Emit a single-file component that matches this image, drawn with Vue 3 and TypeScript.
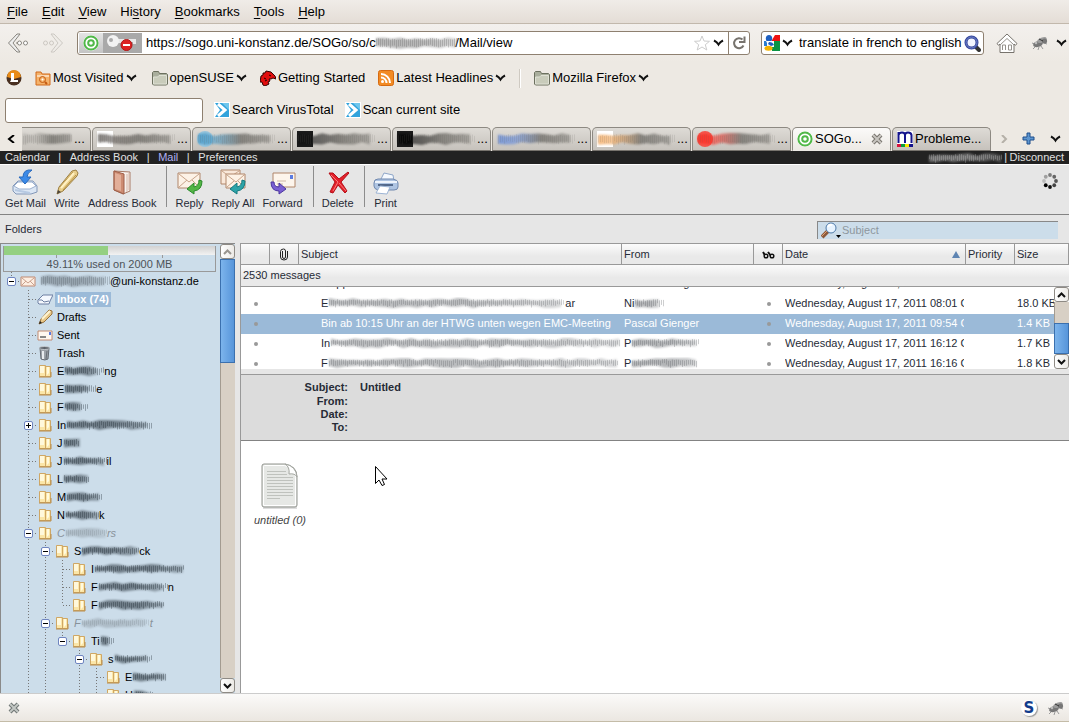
<script setup lang="ts">
import { h, ref } from 'vue'

interface SmudgeProps {
  w: number
  h?: number
  seed?: number
  color?: string
  lead?: string
  strength?: number
}

function randomFrom(seed: number): () => number {
  let s = seed * 7919 + 17
  return () => {
    s = (s * 16807) % 2147483647
    return s / 2147483647
  }
}

// Scribbled-over text: a soft uneven band with fine upright strokes.
const Smudge = (p: SmudgeProps) => {
  const height = p.h ?? 12
  const seed = p.seed ?? 1
  const color = p.color ?? '#3c4650'
  const next = randomFrom(seed)
  const strength = p.strength ?? 1
  const top: string[] = []
  const bottom: string[] = []
  for (let x = 1; x <= p.w; x += 8) {
    top.push(`${x},${(1 + next() * 3).toFixed(1)}`)
    bottom.unshift(`${x},${(height - 1 - next() * 3).toFixed(1)}`)
  }
  let strokes = ''
  for (let x = 1; x < p.w; x += 2) {
    const y = 2 + next() * 2
    const len = height - 5 - next() * 3
    strokes += `M${x}.5 ${y.toFixed(1)}v${len.toFixed(1)}`
  }
  const id = `smudge-${seed}-${p.w}`
  return h('svg', { class: 'smudge', width: p.w, height, viewBox: `0 0 ${p.w} ${height}`, 'aria-hidden': 'true' }, [
    h('defs', [
      h('linearGradient', { id }, [
        h('stop', { offset: '0', 'stop-color': p.lead ?? color }),
        h('stop', { offset: p.lead ? '.25' : '.4', 'stop-color': p.lead ?? color, 'stop-opacity': p.lead ? '.8' : '1' }),
        h('stop', { offset: '.6', 'stop-color': color }),
        h('stop', { offset: '1', 'stop-color': color, 'stop-opacity': '.6' })
      ])
    ]),
    h('polygon', { class: 'haze', points: [...top, ...bottom].join(' '), fill: `url(#${id})`, opacity: (p.lead ? 0.7 : 0.46) * strength }),
    h('path', { d: strokes, stroke: color, 'stroke-width': 1, opacity: (p.lead ? 0.14 : 0.3) * strength })
  ])
}
Smudge.props = ['w', 'h', 'seed', 'color', 'lead', 'strength']

const Chevron = () =>
  h('svg', { width: 11, height: 8, viewBox: '0 0 11 8', 'aria-hidden': 'true' }, [
    h('path', { d: 'M1 1.5Q4 3 5.5 5.5 7 3 10 1.5', fill: 'none', stroke: '#111', 'stroke-width': 2 })
  ])

const ArrowGlyph = (p: { d: string }) =>
  h('svg', { width: 9, height: 8, viewBox: '0 0 9 8', 'aria-hidden': 'true' }, [
    h('path', { d: p.d, fill: 'none', stroke: 'currentColor', 'stroke-width': 2 })
  ])
ArrowGlyph.props = ['d']

const Fly = () =>
  h('svg', { width: 18, height: 16, viewBox: '0 0 18 16', 'aria-hidden': 'true' }, [
    h('path', { d: 'M4 9L1 8M5 11l-3 3M8 12l-1 3M10 11l2 3M13 8l3 1', stroke: '#999', fill: 'none' }),
    h('ellipse', { cx: 7, cy: 9, rx: 5, ry: 3, fill: '#777', transform: 'rotate(-18 7 9)' }),
    h('ellipse', { cx: 11, cy: 5, rx: 5, ry: 2.4, fill: '#9c9c9c', transform: 'rotate(-22 11 5)' }),
    h('circle', { cx: 13.5, cy: 6, r: 2.6, fill: '#777' }),
    h('circle', { cx: 5, cy: 8, r: 1.3, fill: '#bbb' }),
    h('path', { d: 'M8 4l4 2', stroke: '#333' })
  ])

const Rings = () =>
  h('svg', { width: 16, height: 16, viewBox: '0 0 16 16', 'aria-hidden': 'true' }, [
    h('circle', { cx: 8, cy: 8, r: 7.8, fill: '#fff' }),
    h('circle', { cx: 8, cy: 8, r: 6.6, fill: 'none', stroke: '#50b848', 'stroke-width': 2 }),
    h('circle', { cx: 8, cy: 8, r: 2.8, fill: '#fff', stroke: '#50b848', 'stroke-width': 2 })
  ])

const FolderGrey = () =>
  h('svg', { width: 16, height: 16, viewBox: '0 0 16 16', 'aria-hidden': 'true' }, [
    h('path', { d: 'M.5 14V2.5l1-1h5l1 2h7l1 1V14l-1 1h-13z', fill: '#a9ae9c', stroke: '#6c705f' }),
    h('path', { d: 'M1.5 14V7h4l1.5-1.5h7.500V14z', fill: '#c9ccbb', stroke: '#dfe1d5' })
  ])

const VirusArrow = () =>
  h('svg', { width: 16, height: 16, viewBox: '0 0 16 16', 'aria-hidden': 'true' }, [
    h('path', { d: 'M0 0h16v16H0z', fill: '#fff' }),
    h('path', { d: 'M1 1h14v14H1l5-7z', fill: '#31a3dc' }),
    h('path', { d: 'M8 1h7v7z', fill: '#70c6ec' }),
    h('path', { d: 'M4 2l7 6-7 6', fill: 'none', stroke: '#fff', 'stroke-width': 3 })
  ])

const menu = [
  { pre: '', key: 'F', post: 'ile' },
  { pre: '', key: 'E', post: 'dit' },
  { pre: '', key: 'V', post: 'iew' },
  { pre: 'Hi', key: 's', post: 'tory' },
  { pre: '', key: 'B', post: 'ookmarks' },
  { pre: '', key: 'T', post: 'ools' },
  { pre: '', key: 'H', post: 'elp' }
]

const address = ref('https://sogo.uni-konstanz.de/SOGo/so/c' + ' '.repeat(22) + '/Mail/view')
const query = ref('translate in french to english')
const virusQuery = ref('')
const mailQuery = ref('')

const hiddenTabs = [
  { lead: '#b0ada8', seed: 3, back: '' },
  { lead: '#55504c', seed: 4, back: 'white' },
  { lead: '#3f95c6', seed: 5, back: 'round' },
  { lead: '#111111', seed: 6, back: 'dark' },
  { lead: '#000000', seed: 7, back: 'black' },
  { lead: '#5c86dc', seed: 8, back: 'blue' },
  { lead: '#f0a050', seed: 9, back: 'white' },
  { lead: '#ff2a20', seed: 10, back: 'red' }
]

interface Folder {
  guides: string
  start?: string
  w?: number
  end?: string
  faint?: boolean
}

// One letter per indent column: I line, T branch, L last branch, P/M plus or minus box, E minus box that ends its line.
const folders: Folder[] = [
  { guides: ' T', start: 'E', w: 40, end: 'ng' },
  { guides: ' T', start: 'E', w: 32, end: 'e' },
  { guides: ' T', start: 'F', w: 24 },
  { guides: ' P', start: 'In', w: 87 },
  { guides: ' T', start: 'J', w: 17 },
  { guides: ' T', start: 'J', w: 44, end: 'il' },
  { guides: ' T', start: 'L', w: 26 },
  { guides: ' T', start: 'M', w: 36 },
  { guides: ' T', start: 'N', w: 34, end: 'k' },
  { guides: ' M', start: 'C', w: 42, end: 'rs', faint: true },
  { guides: ' IM', start: 'S', w: 58, end: 'ck' },
  { guides: ' IIT', start: 'I', w: 91 },
  { guides: ' IIT', start: 'F', w: 70, end: 'n' },
  { guides: ' IIL', start: 'F', w: 66 },
  { guides: ' IM', start: 'F', w: 69, end: 't', faint: true },
  { guides: ' IIE', start: 'Ti', w: 14 },
  { guides: ' II M', start: 's', w: 38 },
  { guides: ' II IT', start: 'E', w: 34 },
  { guides: ' II IT', start: 'H', w: 20 }
]

interface Message {
  subject: string
  subjectW: number
  subjectEnd: string
  from: string
  fromW: number
  date: string
  size: string
  selected?: boolean
}

const messages: Message[] = [
  { subject: 'Mapp', subjectW: 0, subjectEnd: '', from: 'Pascal Gienger', fromW: 0, date: 'Wednesday, August 17, 2011 07:42 CEST', size: '2.1 KB' },
  { subject: 'E', subjectW: 237, subjectEnd: 'ar', from: 'Ni', fromW: 30, date: 'Wednesday, August 17, 2011 08:01 CEST', size: '18.0 KB' },
  { subject: 'Bin ab 10:15 Uhr an der HTWG unten wegen EMC-Meeting', subjectW: 0, subjectEnd: '', from: 'Pascal Gienger', fromW: 0, date: 'Wednesday, August 17, 2011 09:54 CEST', size: '1.4 KB', selected: true },
  { subject: 'In', subjectW: 290, subjectEnd: '', from: 'P', fromW: 68, date: 'Wednesday, August 17, 2011 16:12 CEST', size: '1.7 KB' },
  { subject: 'F', subjectW: 291, subjectEnd: '', from: 'P', fromW: 66, date: 'Wednesday, August 17, 2011 16:16 CEST', size: '1.8 KB' }
]

const spinner = ['#7c7c7c', '#666666', '#555555', '#444444', '#111111', '#000000', '#bbbbbb', '#a0a0a0']
function spoke(i: number) {
  const a = (i * Math.PI) / 4
  return { x: 8 + Math.sin(a) * 6, y: 8 - Math.cos(a) * 6 }
}
</script>

<template>
  <div class="window">
    <header class="chrome">
      <nav class="menubar" aria-label="Menu">
        <button v-for="m in menu" :key="m.key + m.post" type="button">{{ m.pre }}<u>{{ m.key }}</u>{{ m.post }}</button>
      </nav>

      <div class="navbar">
        <button type="button" class="nav-arrow" aria-label="Back">
          <svg width="22" height="20" viewBox="0 0 22 20">
            <path d="M10 1L1.500 10 10 19h3l-7-9 7-9z" fill="#eee" stroke="#88857f" />
            <circle cx="12.500" cy="10" r="2" fill="#fff" stroke="#88857f" /><circle cx="18.500" cy="10" r="2" fill="#fff" stroke="#88857f" />
            <path d="M9 10h2" stroke="#88857f" />
          </svg>
        </button>
        <button type="button" class="nav-arrow" aria-label="Forward" disabled>
          <svg width="22" height="20" viewBox="0 0 22 20">
            <path d="M12 1l8.500 9-8.500 9H9l7-9-7-9z" fill="#efece8" stroke="#ccc8c2" />
            <circle cx="3.500" cy="10" r="2" fill="none" stroke="#ccc8c2" /><circle cx="9.500" cy="10" r="2" fill="none" stroke="#ccc8c2" />
          </svg>
        </button>
        <div class="field address">
          <span class="site-icon"><Rings /></span>
          <span class="key-icon">
            <svg width="34" height="18" viewBox="0 0 34 18" aria-hidden="true">
              <path d="M12 5h18v5h-3V8h-2v3h-3V9H12z" fill="#e8e8e8" />
              <circle cx="7" cy="7" r="6" fill="#f2f2f2" /><circle cx="5" cy="6" r="2" fill="#aaa" />
              <circle cx="20.500" cy="11" r="5.500" fill="#d22" stroke="#b01818" /><path d="M17 11h7" stroke="#fff" stroke-width="2" />
            </svg>
          </span>
          <div class="address-text">
            <input v-model="address" type="text" aria-label="Address" />
            <Smudge class="address-smudge" :w="82" :h="14" :seed="21" color="#666666" />
          </div>
          <button type="button" aria-label="Bookmark this page">
            <svg width="16" height="16" viewBox="0 0 16 16"><path d="M8 1l2 5 5.500.3-4.200 3.400 1.500 5.300L8 12l-4.800 3 1.500-5.300L.5 6.300 6 6z" fill="#fff" stroke="#ccc" /></svg>
          </button>
          <button type="button" class="drop" aria-label="Show history"><Chevron /></button>
          <button type="button" class="reload" aria-label="Reload">
            <svg width="14" height="14" viewBox="0 0 14 14"><path d="M11.500 9.500A5 5 0 1 1 10.500 3.500" fill="none" stroke="#77736d" stroke-width="2" /><path d="M7 6h5.500V.5" fill="none" stroke="#77736d" stroke-width="2" /></svg>
          </button>
        </div>
        <div class="field search">
          <button type="button" class="engine" aria-label="Choose search engine">
            <svg width="16" height="16" viewBox="0 0 16 16">
              <path d="M0 0h16v16H0z" fill="#fff" /><path d="M8 0h8v6H8z" fill="#e11" /><path d="M8 6h8v10H8z" fill="#0a9444" />
              <path d="M0 6h3v5H0z" fill="#2a7dd0" />
              <path d="M8 0h3L8 5z" fill="#fff" />
              <ellipse cx="5" cy="3.500" rx="3.200" ry="3.500" fill="#1e5fc0" />
              <path d="M2 6h8v6H5z" fill="#fff" />
              <path d="M5 7q4 0 5 3l-3 1-3-2z" fill="#1e5fc0" />
              <ellipse cx="4.500" cy="13.300" rx="4" ry="2.500" fill="#f5b400" />
            </svg>
            <Chevron />
          </button>
          <input v-model="query" type="text" aria-label="Search the web" />
          <button type="button" aria-label="Search">
            <svg width="17" height="17" viewBox="0 0 17 17"><path d="M11 11l4 4" stroke="#333" stroke-width="4" stroke-linecap="round" /><circle cx="7.500" cy="7.500" r="5.500" fill="#f2f5ff" stroke="#34469a" stroke-width="3" /><circle cx="7.500" cy="7.500" r="5.500" fill="none" stroke="#7384cc" /></svg>
          </button>
        </div>
        <button type="button" class="home" aria-label="Home">
          <svg width="22" height="21" viewBox="0 0 22 21"><path d="M11 1L1 10.500l1.500 1.800L4 11v8.500h14V11l1.500 1.300L21 10.500z" fill="#fff" stroke="#77736d" /><path d="M4 12l7-6.500 7 6.500M6.500 17v-5h3v5M12.500 17v-5h3v5h-3" fill="none" stroke="#96928c" /></svg>
        </button>
        <button type="button" class="bug" aria-label="Firebug"><Fly /></button>
        <button type="button" class="more" aria-label="More"><Chevron /></button>
      </div>

      <nav class="bookmarks" aria-label="Bookmarks">
        <a href="#" aria-label="L">
          <svg width="16" height="16" viewBox="0 0 16 16"><circle cx="8" cy="8" r="7.500" fill="#493021" /><path d="M1 7a7 7 0 0 1 14 0L8 9z" fill="#e98b16" /><path d="M5 3h3v7h4v2H4l1-2z" fill="#fff" /></svg>
        </a>
        <a href="#" class="most">
          <svg width="16" height="16" viewBox="0 0 16 16"><path d="M1 15V2h5l1 2h8v11z" fill="#f5b26a" stroke="#d0681a" /><path d="M2 6h12" stroke="#fff" /><circle cx="7.500" cy="9.500" r="3" fill="#f5b26a" stroke="#c45a10" /><circle cx="7.500" cy="9.500" r="1" fill="#fff" /><path d="M10 12l2 2" stroke="#c45a10" stroke-width="2" /></svg>
          <span>Most Visited</span><Chevron />
        </a>
        <a href="#"><FolderGrey /><span>openSUSE</span><Chevron /></a>
        <a href="#">
          <svg width="16" height="16" viewBox="0 0 16 16"><path d="M1 6l2-1V3l2 0 1-2 5 1 4 4 1 3-3-1-2 1-2 0 1 2-2 1 1 2-4 2-2-1-1-3-2 0z" fill="#e10d0d" stroke="#300" /><path d="M9 5l2 1M4 8l2 1M5 11l2-1" stroke="#200" /></svg>
          <span>Getting Started</span>
        </a>
        <a href="#">
          <svg width="16" height="16" viewBox="0 0 16 16"><rect x=".5" y=".5" width="15" height="15" rx="2" fill="#f28b24" stroke="#d66a10" /><circle cx="4.500" cy="11.500" r="1.500" fill="#fff" /><path d="M3 7.500A5.500 5.500 0 0 1 8.500 13M3 4a9 9 0 0 1 9 9" fill="none" stroke="#fff" stroke-width="2" /></svg>
          <span>Latest Headlines</span><Chevron />
        </a>
        <span class="divider"></span>
        <a href="#"><FolderGrey /><span>Mozilla Firefox</span><Chevron /></a>
      </nav>

      <div class="virusbar">
        <input v-model="virusQuery" type="text" aria-label="VirusTotal search" />
        <button type="button"><VirusArrow /><span>Search VirusTotal</span></button>
        <button type="button"><VirusArrow /><span>Scan current site</span></button>
      </div>

      <div class="tabstrip">
        <button type="button" class="strip-button first" aria-label="Scroll tabs left"><ArrowGlyph d="M7 0L2 4l5 4" /></button>
        <div class="tabs">
          <button v-for="(t, i) in hiddenTabs" :key="t.seed" type="button" class="tab" :class="{ cut: i === 0 }">
            <span v-if="i > 0" class="mark" :class="t.back"></span>
            <Smudge class="tab-smudge" :class="{ over: i > 0 }" :w="i === 0 ? 50 : 78" :h="14" :seed="t.seed" color="#66645f" :lead="t.lead" />
            <span>...</span>
          </button>
          <div class="tab active">
            <Rings /><button type="button" class="tab-title">SOGo...</button>
            <button type="button" class="close" aria-label="Close tab">
              <svg width="12" height="12" viewBox="0 0 12 12"><path d="M2 2l8 8M10 2l-8 8" stroke="#77736d" stroke-width="4" /><path d="M2 2l8 8M10 2l-8 8" stroke="#c8c5c0" stroke-width="2" /></svg>
            </button>
          </div>
          <button type="button" class="tab">
            <svg width="16" height="16" viewBox="0 0 16 16" aria-hidden="true"><path d="M0 0h16v16H0z" fill="#fff" /><path d="M1.500 12V1M1.500 4Q2 1.500 5 1.500 8 1.500 8 4v8M8 4q0-2.500 3-2.500T14.500 4v8" fill="none" stroke="#14148c" stroke-width="2" /><path d="M0 13h4v3H0z" fill="#d8133c" /><path d="M4 13h4v3H4z" fill="#0a9c3c" /><path d="M8 13h4v3H8z" fill="#f7e600" /><path d="M12 13h4v3h-4z" fill="#14148c" /></svg>
            <span>Probleme...</span>
          </button>
        </div>
        <button type="button" class="strip-button pale" aria-label="Scroll tabs right"><ArrowGlyph d="M2 0l4 4-4 4" /></button>
        <button type="button" class="strip-button" aria-label="New tab">
          <svg width="13" height="13" viewBox="0 0 13 13"><path d="M5 1h3v4h4v3H8v4H5V8H1V5h4z" fill="#5d95cf" stroke="#1f4f8c" /></svg>
        </button>
        <button type="button" class="strip-button" aria-label="List all tabs"><Chevron /></button>
      </div>
    </header>

    <div class="app">
      <nav class="topnav" aria-label="Modules">
        <a href="#">Calendar</a><i>|</i><a href="#">Address Book</a><i>|</i><a href="#" class="current">Mail</a><i>|</i><a href="#">Preferences</a>
        <span class="spacer"></span>
        <Smudge :w="74" :h="12" :seed="31" color="#c8c8c8" /><i class="tight">|</i><a href="#">Disconnect</a>
      </nav>

      <div class="toolbar">
        <button type="button">
          <svg width="26" height="26" viewBox="0 0 26 26"><path d="M1 17l5-5h15l4 5v6l-6 2H4l-3-3z" fill="#dbe6f4" stroke="#8297b8" /><path d="M2 17l4-4h14l4 4-6 3H7z" fill="#fff" stroke="#9cb0cf" /><path d="M3 21l15 3" stroke="#b6c9e2" stroke-width="2" /><path d="M20 1q-9-1-9 7H7l6 7 6-7h-4q0-4 5-7z" fill="#3b8ae8" stroke="#2769bd" /></svg>
          <span>Get Mail</span>
        </button>
        <button type="button">
          <svg width="26" height="26" viewBox="0 0 26 26"><path d="M3 25l2-7L18 2l4-1 2 3-1 3L9 22z" fill="#e9cf8c" stroke="#9c7f42" /><path d="M6 18L19 3M9 21L22 6" stroke="#b89347" /><path d="M7 19L20 4" stroke="#fff1c4" stroke-width="2" /><path d="M3 25l1-4 3 2z" fill="#4b443c" /></svg>
          <span>Write</span>
        </button>
        <button type="button">
          <svg width="26" height="26" viewBox="0 0 26 26"><path d="M5 2l16 1v19l-7 3-9-4z" fill="#f8f1ec" stroke="#a87a66" /><path d="M5 2l10 3v20l-10-4z" fill="#cd8c72" stroke="#9e5e48" /><path d="M6 4l6 2v16l-6-2z" fill="#e2ae98" /><path d="M18 5v18M20 4v17" stroke="#d4b4a6" /></svg>
          <span>Address Book</span>
        </button>
        <span class="rule"></span>
        <button type="button">
          <svg width="26" height="26" viewBox="0 0 26 26"><path d="M1 4h22v15H1z" fill="#fdf2e6" stroke="#b0866a" /><path d="M2 5l10 8L22 5M2 18l8-7M22 18l-7-7" fill="none" stroke="#c8a48a" /><path d="M25 12q0 9-8 10v3l-7-5 7-6v4q5-1 5-7z" fill="#53b545" stroke="#2b8a2b" /></svg>
          <span>Reply</span>
        </button>
        <button type="button">
          <svg width="26" height="26" viewBox="0 0 26 26"><path d="M1 1h19v14H1z" fill="#f9e8da" stroke="#b0866a" /><path d="M2 2l8 6 9-6" fill="none" stroke="#c8a48a" /><path d="M6 5h19v14H6z" fill="#fdf2e6" stroke="#b0866a" /><path d="M7 6l9 7 8-7M7 18l7-6M24 18l-6-6" fill="none" stroke="#c8a48a" /><path d="M25 12q0 9-8 10v3l-7-5 7-6v4q5-1 5-7z" fill="#2da4a8" stroke="#157a80" /></svg>
          <span>Reply All</span>
        </button>
        <button type="button">
          <svg width="26" height="26" viewBox="0 0 26 26"><path d="M3 4h22v14H3z" fill="#fdf5ec" stroke="#b0866a" /><path d="M20 6h3v4h-3z" fill="#5b7be0" /><path d="M7 12h9M7 15h6" stroke="#d0b8a4" /><path d="M1 13q0 9 8 9v3l7-5-7-6v4q-5 0-5-5z" fill="#7a5fd2" stroke="#4c36a0" /></svg>
          <span>Forward</span>
        </button>
        <span class="rule"></span>
        <button type="button">
          <svg width="26" height="26" viewBox="0 0 26 26"><path d="M4 4l4 0 6 6 9-7 1 1-8 9 6 9-2 2-7-8-5 8-3-1 5-10z" fill="#e4202a" stroke="#b40f18" /><path d="M6 6l7 7-5 9M14 14l7 8" fill="none" stroke="#fa7a7a" /></svg>
          <span>Delete</span>
        </button>
        <span class="rule"></span>
        <button type="button">
          <svg width="26" height="26" viewBox="0 0 26 26"><path d="M8 10l3-6 9 2 1 6" fill="#f6faff" stroke="#8ea6c8" /><path d="M1 14q0-4 4-4h15q5 1 5 4v4q0 3-4 3H5q-4-1-4-4z" fill="#aec4e2" stroke="#7088ae" /><path d="M2 13h22" stroke="#eef4fc" stroke-width="2" /><path d="M5 16h15" stroke="#53698c" stroke-width="2" /><path d="M7 17l10 1-3 7-11-1z" fill="#fff" stroke="#9cb4d4" /></svg>
          <span>Print</span>
        </button>
        <span class="spacer"></span>
        <svg class="spinner" width="16" height="16" viewBox="0 0 16 16" role="img" aria-label="Loading">
          <circle v-for="(c, i) in spinner" :key="i" :cx="spoke(i).x" :cy="spoke(i).y" r="1.900" :fill="c" />
        </svg>
      </div>

      <div class="caption">
        <h1>Folders</h1>
        <div class="mail-search">
          <button type="button" aria-label="Search in">
            <svg width="20" height="17" viewBox="0 0 20 17"><path d="M7 9l-6 6" stroke="#8c5a3c" stroke-width="4" /><path d="M6 9l-5 5" stroke="#e0a070" /><circle cx="10" cy="6" r="5" fill="#e8f4ff" stroke="#4d79a8" /><path d="M7 5q1-3 4-2" stroke="#fff" stroke-width="2" fill="none" /><path d="M15 13h5l-2.500 3z" fill="#000" /></svg>
          </button>
          <input v-model="mailQuery" type="search" placeholder="Subject" aria-label="Search messages" />
        </div>
      </div>

      <main class="body">
        <aside class="sidebar">
          <div class="tree-area">
            <div class="quota">
              <div class="meter"><div class="used"></div></div>
              <div class="ticks"><b></b><b></b><b></b></div>
              <p>49.11% used on 2000 MB</p>
            </div>
            <ul class="tree">
              <li>
                <span class="g E"><button type="button" aria-label="Collapse"></button></span>
                <svg class="account" width="16" height="16" viewBox="0 0 16 16"><path d="M1 4h14v9H1z" fill="#fdeee2" stroke="#c08a72" /><path d="M2 5l6 5 6-5M2 12l4-4M14 12l-4-4" fill="none" stroke="#c9a18e" /></svg>
                <Smudge :w="70" :h="14" :seed="41" color="#59636c" /><span class="name">@uni-konstanz.de</span>
              </li>
              <li>
                <span class="g"></span><span class="g T"></span>
                <svg width="16" height="16" viewBox="0 0 16 16"><path d="M1 9l5-5h10l-3 6-1 3H2l-1-1z" fill="#f4f8fe" stroke="#6c7fa2" /><path d="M2 9h3l2 2 5-1" fill="none" stroke="#6c7fa2" /></svg>
                <a href="#" class="name inbox">Inbox (74)</a>
              </li>
              <li>
                <span class="g"></span><span class="g T"></span>
                <svg width="16" height="16" viewBox="0 0 16 16"><path d="M2 15l2-5L12 1l3 1v3L7 13z" fill="#e8c88a" stroke="#97713c" /><path d="M5 10l8-8" stroke="#fff3d0" stroke-width="2" /><path d="M2 15l1-3 2 2z" fill="#222" /></svg>
                <a href="#" class="name">Drafts</a>
              </li>
              <li>
                <span class="g"></span><span class="g T"></span>
                <svg width="16" height="16" viewBox="0 0 16 16"><path d="M1 4h14v9H1z" fill="#fff8f0" stroke="#c08a72" /><path d="M12 5h2v3h-2z" fill="#5878e0" /><path d="M3 10h6" stroke="#888" stroke-width="2" /></svg>
                <a href="#" class="name">Sent</a>
              </li>
              <li>
                <span class="g"></span><span class="g T"></span>
                <svg width="16" height="16" viewBox="0 0 16 16"><path d="M3 3l1 11q4 2 7 0l1-11z" fill="#9ba1a8" stroke="#666c74" /><ellipse cx="7.500" cy="3" rx="5" ry="1.500" fill="#5b6068" stroke="#c3c8cd" /><path d="M6 6v8" stroke="#e8ecf0" stroke-width="2" /><path d="M10 6l-1 8" stroke="#656c74" /></svg>
                <a href="#" class="name">Trash</a>
              </li>
              <li v-for="(f, i) in folders" :key="i">
                <span v-for="(g, j) in f.guides" :key="j" class="g" :class="g">
                  <button v-if="g === 'P' || g === 'M' || g === 'E'" type="button" :aria-label="g === 'P' ? 'Expand' : 'Collapse'"></button>
                </span>
                <svg width="16" height="16" viewBox="0 0 16 16"><path d="M2.500 2.500h6v11h-6zM8.500 3.500h5v10h-5z" fill="#fbe6a8" stroke="#cfa765" /><path d="M3 3h4v7H3z" fill="#fff8dc" /><path d="M10 4h2v6l-2 2z" fill="#fffae0" /><path d="M2 14h12V9" fill="none" stroke="#b98c48" /></svg>
                <a href="#" class="name covered" :class="{ faint: f.faint }">{{ f.start }}<Smudge :w="f.w" :seed="i + 50" :color="f.faint ? '#7b858d' : '#26313a'" :strength="f.faint ? 0.8 : 1.2" />{{ f.end }}</a>
              </li>
            </ul>
          </div>
          <div class="scroll folders-scroll">
            <button type="button" class="dim" aria-label="Scroll up"><ArrowGlyph d="M1 6l3.500-3.500L8 6" /></button>
            <div class="thumb"></div>
            <div class="track"></div>
            <button type="button" aria-label="Scroll down"><ArrowGlyph d="M1 2l3.500 3.500L8 2" /></button>
          </div>
        </aside>

        <section class="content">
          <table class="list head">
            <colgroup><col class="c-icon" /><col class="c-icon" /><col /><col class="c-from" /><col class="c-icon" /><col class="c-date" /><col class="c-prio" /><col class="c-size" /></colgroup>
            <thead>
              <tr>
                <th></th>
                <th class="mid">
                  <svg width="10" height="13" viewBox="0 0 10 13" aria-label="Attachment"><path d="M3.500 3v6q0 1.500 1.500 1.500T6.500 9V3Q6.500 1 4.500 1 1.500 1 1.500 3.500V9q0 3 3.500 3t3.500-3V3" fill="none" stroke="#222" /></svg>
                </th>
                <th>Subject</th><th>From</th>
                <th class="mid">
                  <svg width="13" height="8" viewBox="0 0 13 8" aria-label="Unread"><path d="M1 1l3 5M6 1l3 4" stroke="#111" stroke-width="2" /><circle cx="4" cy="5" r="1.800" fill="#fff" stroke="#111" stroke-width="1.500" /><circle cx="10" cy="5" r="1.800" fill="#fff" stroke="#111" stroke-width="1.500" /></svg>
                </th>
                <th><span class="sorted">Date<svg width="8" height="7" viewBox="0 0 8 7" aria-hidden="true"><path d="M4 0l4 7H0z" fill="#5e84b2" /></svg></span></th>
                <th>Priority</th><th>Size</th>
              </tr>
              <tr><td colspan="8" class="count">2530 messages</td></tr>
            </thead>
          </table>
          <div class="list-body">
            <div class="rows">
              <table class="list">
                <colgroup><col class="c-icon" /><col class="c-icon" /><col /><col class="c-from" /><col class="c-icon" /><col class="c-date" /><col class="c-prio" /><col class="c-size-short" /></colgroup>
                <tbody>
                  <tr v-for="(m, i) in messages" :key="i" :class="{ selected: m.selected }">
                    <td class="mid"><span class="dot"></span></td>
                    <td></td>
                    <td class="subject"><div class="cell">{{ m.subject }}<Smudge v-if="m.subjectW" :w="m.subjectW" :seed="i + 80" color="#5b5f64" :strength="0.9" />{{ m.subjectEnd }}</div></td>
                    <td><div class="cell">{{ m.from }}<Smudge v-if="m.fromW" :w="m.fromW" :seed="i + 90" color="#5b5f64" /></div></td>
                    <td class="mid"><span class="dot"></span></td>
                    <td><div class="cell">{{ m.date }}</div></td>
                    <td></td>
                    <td class="size"><div class="cell">{{ m.size }}</div></td>
                  </tr>
                </tbody>
              </table>
            </div>
            <div class="scroll list-scroll">
              <button type="button" aria-label="Scroll up"><ArrowGlyph d="M1 6l3.500-3.500L8 6" /></button>
              <div class="track"></div>
              <div class="thumb"></div>
              <button type="button" aria-label="Scroll down"><ArrowGlyph d="M1 2l3.500 3.500L8 2" /></button>
            </div>
          </div>

          <article class="preview">
            <dl>
              <dt>Subject:</dt><dd>Untitled</dd>
              <dt>From:</dt><dd></dd>
              <dt>Date:</dt><dd></dd>
              <dt>To:</dt><dd></dd>
            </dl>
            <div class="attachments">
              <a href="#">
                <svg width="40" height="48" viewBox="0 0 40 48" aria-hidden="true">
                  <path d="M3 46h34" stroke="#ddd" stroke-width="2" />
                  <path d="M4 2h21q12 2 12 13v28q0 2-2 2H4q-2 0-2-2V4q0-2 2-2z" fill="#e6e8e5" stroke="#92958f" />
                  <path d="M4.500 3.500h20q11 2 11 12v28h-32v-39z" fill="none" stroke="#fff" />
                  <path d="M25 2q5 3 4 10 6-1 8 3Q36 4 25 2z" fill="#fff" stroke="#a4a7a1" />
                  <path d="M7 9.500h19M7 12.500h20M7 15.500h26M7 18.500h26M7 21.500h26M7 24.500h26M7 27.500h26M7 30.500h26M7 33.500h26M7 36.500h13" stroke="#bfc2bd" />
                </svg>
                <span>untitled (0)</span>
              </a>
              <svg class="pointer" width="14" height="22" viewBox="0 0 14 22" aria-hidden="true"><path d="M1.500 1.500v17l3.500-3.500 3 5.500 2.500-1-2.500-5.500h5z" fill="#fff" stroke="#000" /></svg>
            </div>
          </article>
        </section>
      </main>
    </div>

    <footer class="status">
      <button type="button" aria-label="Close bar">
        <svg width="12" height="12" viewBox="0 0 12 12"><path d="M2 2l8 8M10 2l-8 8" stroke="#6f7674" stroke-width="4" /><path d="M2 2l8 8M10 2l-8 8" stroke="#c3c7c4" stroke-width="2" /></svg>
      </button>
      <span class="spacer"></span>
      <span class="badge">S</span>
      <Fly />
    </footer>
  </div>
</template>

<style>
body {
  margin: 0;
}
.smudge {
  display: block;
  flex: none;
  overflow: visible;
}
.smudge .haze {
  filter: blur(1px);
}
</style>

<style scoped>
.window {
  display: flex;
  flex-direction: column;
  height: 100vh;
  overflow: hidden;
  font: 13px/16px 'Liberation Sans', Arial, sans-serif;
  color: #000;
  background: #ede9e3;
}
button,
input {
  font: inherit;
  color: inherit;
  border: 0;
  padding: 0;
  margin: 0;
  background: none;
  outline: none;
}
a {
  color: inherit;
  text-decoration: none;
}
svg {
  display: block;
  flex: none;
}
.spacer {
  flex: 1;
}
.chrome {
  flex: none;
}
.menubar {
  display: flex;
  gap: 14px;
  height: 23px;
  padding: 0 7px;
  align-items: center;
  background: linear-gradient(#f0ece8, #e4ddd6);
  border-bottom: 1px solid #c2b8ac;
}
.menubar u {
  text-underline-offset: 2px;
}
.navbar {
  display: flex;
  align-items: center;
  height: 38px;
  padding-left: 7px;
  background: linear-gradient(#f3f0ed, #ede9e3);
}
.nav-arrow {
  width: 35px;
  height: 24px;
  display: flex;
  align-items: center;
}
.field {
  display: flex;
  align-items: center;
  height: 24px;
  box-sizing: border-box;
  background: #fff;
  border: 1px solid #8e8070;
  border-radius: 3px;
}
.address {
  flex: 1;
  min-width: 0;
}
.site-icon,
.key-icon {
  display: flex;
  align-items: center;
  justify-content: center;
  height: 20px;
  width: 24px;
  margin-left: 1px;
  background: linear-gradient(#e4e4e4, #c4c4c4);
}
.key-icon {
  width: 39px;
  margin-left: 0;
  background: #a9a9a9;
}
.address-text {
  position: relative;
  flex: 1;
  min-width: 0;
  margin-left: 4px;
}
.address-text input {
  display: block;
  width: 100%;
}
.address-smudge {
  position: absolute;
  top: 1px;
  left: 229px;
}
.drop {
  width: 18px;
  padding-left: 3px;
}
.reload {
  height: 22px;
  padding: 0 3px;
  border-left: 1px solid #8e8070;
}
.search {
  flex: none;
  width: 223px;
  margin-left: 11px;
  padding: 0 2px;
}
.engine {
  display: flex;
  align-items: center;
  gap: 2px;
}
.search input {
  flex: 1;
  min-width: 0;
  margin-left: 6px;
}
.home {
  margin-left: 12px;
}
.bug {
  margin-left: 13px;
}
.more {
  margin: 0 2px 0 7px;
}
.bookmarks {
  display: flex;
  align-items: center;
  gap: 13px;
  height: 32px;
  padding-left: 6px;
}
.bookmarks a {
  display: flex;
  align-items: center;
  gap: 2px;
}
.bookmarks .most {
  margin-right: 2px;
}
.divider {
  width: 1px;
  height: 19px;
  background: #cfcac2;
  border-right: 1px solid #fff;
}
.virusbar {
  display: flex;
  align-items: center;
  height: 32px;
  padding-left: 5px;
  gap: 11px;
}
.virusbar input {
  width: 198px;
  height: 25px;
  box-sizing: border-box;
  padding: 0 4px;
  background: #fff;
  border: 1px solid #8e8070;
  border-radius: 3px;
}
.virusbar button {
  display: flex;
  gap: 2px;
}
.tabstrip {
  display: flex;
  height: 25px;
}
.strip-button {
  width: 27px;
  display: flex;
  align-items: center;
  justify-content: center;
}
.strip-button.first {
  width: 22px;
}
.strip-button.pale {
  width: 22px;
  color: #b5b0a8;
}
.tabs {
  display: flex;
  flex: 1;
  min-width: 0;
  gap: 1px;
}
.tab {
  flex: 0 1 99px;
  min-width: 0;
  display: flex;
  align-items: center;
  gap: 2px;
  box-sizing: border-box;
  overflow: hidden;
  padding-left: 4px;
  margin-top: 1px;
  border: 1px solid #8d8982;
  border-bottom: 1px solid #77736d;
  border-radius: 5px 5px 0 0;
  background: linear-gradient(#dedbd6, #c6c2bc);
}
.tab.cut {
  flex-basis: 69px;
  padding-left: 0;
  border-left: 0;
  border-radius: 0 5px 0 0;
}
.tab.active {
  background: linear-gradient(#fbfaf9, #ece9e4);
  border-bottom-color: #ece9e4;
}
.tab-title {
  flex: 1;
  text-align: left;
}
.close {
  margin-right: 7px;
}
.mark {
  flex: none;
  width: 16px;
  height: 16px;
}
.mark.white {
  background: #fff;
}
.mark.black,
.mark.dark {
  background: #1a1a1a;
}
.mark.round {
  border-radius: 8px;
  background: #9cc7dd;
}
.mark.red {
  border-radius: 8px;
  background: #f5564c;
}
.tab-smudge.over {
  margin-left: -18px;
}

.app {
  flex: 1;
  min-height: 0;
  display: flex;
  flex-direction: column;
  font-size: 11px;
  line-height: 13px;
  color: #262b36;
  background: #e6e6e6;
}
.topnav {
  flex: none;
  display: flex;
  align-items: center;
  padding: 0 5px;
  color: #e0e0e0;
  background: #222;
  border-bottom: 1px solid #fff;
}
.topnav i {
  width: 20px;
  text-align: center;
  font-style: normal;
}
.topnav i.tight {
  width: 8px;
}
.topnav .current {
  color: #b0b0f4;
}
.toolbar {
  flex: none;
  display: flex;
  align-items: flex-start;
  height: 49px;
  padding-left: 1px;
  border-bottom: 1px solid #838383;
}
.toolbar button {
  display: flex;
  flex-direction: column;
  align-items: center;
  padding: 4px 4px 0;
  gap: 2px;
}
.rule {
  width: 1px;
  height: 41px;
  margin: 1px 4px 0 6px;
  background: #8c8c8c;
}
.spinner {
  margin: 8px 11px 0 0;
}
.caption {
  flex: none;
  display: flex;
  align-items: center;
  justify-content: space-between;
  height: 28px;
  padding: 0 11px 0 5px;
}
h1 {
  margin: 0;
  font: inherit;
}
.mail-search {
  display: flex;
  align-items: center;
  box-sizing: border-box;
  width: 241px;
  height: 18px;
  margin-top: 2px;
  padding-left: 3px;
  background: #ccddea;
  border-top: 1px solid #888;
  border-left: 1px solid #888;
}
.mail-search input {
  flex: 1;
  min-width: 0;
  margin-left: 1px;
}
.mail-search input::placeholder {
  color: #8e979e;
}
.body {
  flex: 1;
  min-height: 0;
  display: flex;
  gap: 5px;
}
.sidebar {
  flex: none;
  box-sizing: border-box;
  width: 235px;
  display: flex;
  border-top: 1px solid #8a8a8a;
  border-left: 1px solid #8a8a8a;
  background: #ccddea;
}
.tree-area {
  flex: 1;
  min-width: 0;
  overflow: hidden;
}
.quota {
  box-sizing: border-box;
  height: 26px;
  margin: 2px 4px 0 2px;
  border: 1px solid #999;
  border-top: 0;
}
.meter {
  height: 9px;
  background: linear-gradient(#d2d2d2, #f2f2f2);
}
.used {
  width: 49.11%;
  height: 9px;
  background: #94d082;
}
.ticks {
  display: flex;
  justify-content: space-evenly;
  height: 3px;
}
.ticks b {
  width: 1px;
  background: #999;
}
.quota p {
  margin: 0;
  text-align: center;
  color: #4c5358;
}
.tree {
  margin: 0;
  padding: 0 0 0 2px;
  list-style: none;
  color: #000;
}
.tree li {
  display: flex;
  align-items: center;
  height: 18px;
}
.tree li > svg:not(.smudge) {
  margin-right: 4px;
}
.g {
  flex: none;
  width: 17px;
  height: 18px;
  display: flex;
  align-items: center;
  justify-content: center;
  background-repeat: no-repeat;
}
.g.I {
  background-image: repeating-linear-gradient(#777 0 1px, transparent 1px 3px);
  background-size: 1px 18px;
  background-position: 8px 0;
}
.g.T,
.g.P,
.g.M,
.g.L,
.g.E {
  background-image: repeating-linear-gradient(#777 0 1px, transparent 1px 3px), repeating-linear-gradient(90deg, #777 0 1px, transparent 1px 3px);
  background-size: 1px 18px, 8px 1px;
  background-position: 8px 0, 9px 9px;
}
.g.L,
.g.E {
  background-size: 1px 9px, 8px 1px;
}
.g button {
  width: 9px;
  height: 9px;
  box-sizing: border-box;
  border: 1px solid #6f85c0;
  border-radius: 2px;
  background: linear-gradient(#000, #000) center / 5px 1px no-repeat, #fff;
}
.g.P button {
  background: linear-gradient(#000, #000) center / 5px 1px no-repeat, linear-gradient(#000, #000) center / 1px 5px no-repeat, #fff;
}
.name.covered {
  display: flex;
  align-items: center;
}
.faint {
  color: #89929a;
  font-style: italic;
}
.inbox {
  padding: 1px 2px;
  margin-left: -2px;
  color: #fff;
  font-weight: bold;
  background: #9bbad8;
}
.scroll {
  flex: none;
  width: 15px;
  display: flex;
  flex-direction: column;
  color: #111;
}
.scroll button {
  flex: none;
  height: 15px;
  box-sizing: border-box;
  display: flex;
  align-items: center;
  justify-content: center;
  border: 1px solid #8e8a84;
  border-radius: 3px;
  background: linear-gradient(90deg, #fff, #eceae6);
}
.scroll .dim {
  color: #99958f;
}
.track {
  flex: 317;
  background: #d8d0c5;
  border-left: 1px solid #a39b90;
}
.thumb {
  flex: 103;
  box-sizing: border-box;
  border: 1px solid #3b70ae;
  background: linear-gradient(90deg, #7cb4ec, #5795da);
}
.list-scroll .track {
  flex: 22;
}
.list-scroll .thumb {
  flex: 30;
}
.content {
  flex: 1;
  min-width: 0;
  display: flex;
  flex-direction: column;
  border-left: 1px solid #999;
}
.list {
  width: 100%;
  table-layout: fixed;
  border-collapse: separate;
  border-spacing: 0;
}
.list th,
.list td {
  padding: 0 2px;
  text-align: left;
  font-weight: normal;
  white-space: nowrap;
  overflow: hidden;
}
.list .mid {
  padding: 0;
  text-align: center;
}
.list .size {
  padding-right: 0;
}
.mid svg {
  display: inline-block;
  vertical-align: middle;
}
.c-icon {
  width: 29px;
}
.c-from {
  width: 132px;
}
.c-date {
  width: 183px;
}
.c-prio {
  width: 49px;
}
.c-size {
  width: 54px;
}
.c-size-short {
  width: 39px;
}
.list.head th {
  height: 20px;
  border-top: 1px solid #999;
  border-right: 1px solid #999;
  border-bottom: 1px solid #999;
  background: linear-gradient(#fbfbfb, #e9e9e9 60%);
}
.list.head .count {
  height: 21px;
  border-bottom: 1px solid #999;
  background: linear-gradient(#fbfbfb, #e9e9e9 60%);
}
.sorted {
  display: flex;
  align-items: center;
  justify-content: space-between;
  padding-right: 3px;
}
.list-body {
  flex: none;
  height: 82px;
  display: flex;
  background: #fff;
}
.rows {
  flex: 1;
  min-width: 0;
  overflow: hidden;
}
.rows .list {
  margin-top: -13px;
}
.rows td {
  height: 18px;
  padding-bottom: 2px;
}
.list.head + .list-body .mid {
  padding-bottom: 2px;
}
.rows .subject {
  padding-left: 22px;
  padding-right: 0;
}
.cell {
  display: flex;
  align-items: center;
  overflow: hidden;
}
.selected {
  color: #fff;
  background: #9bbad8;
}
.dot {
  display: inline-block;
  width: 4px;
  height: 4px;
  border-radius: 2px;
  background: #999;
  vertical-align: middle;
}
.preview {
  flex: 1;
  min-height: 0;
  display: flex;
  flex-direction: column;
  margin-top: 5px;
  border-top: 1px solid #999;
  background: #fff;
}
dl {
  flex: none;
  display: grid;
  grid-template-columns: 107px 1fr;
  column-gap: 12px;
  margin: 0;
  padding: 6px 0;
  font-weight: bold;
  background: #dcdcdc;
  border-bottom: 1px solid #838383;
}
dt {
  text-align: right;
}
dd {
  margin: 0;
}
dt:first-child {
  padding-bottom: 1px;
}
.attachments {
  position: relative;
  flex: 1;
  padding: 21px 13px;
  font-style: italic;
}
.attachments a {
  display: inline-flex;
  flex-direction: column;
  align-items: center;
  gap: 4px;
  color: #444;
}
.pointer {
  position: absolute;
  left: 133px;
  top: 24px;
}
.status {
  flex: none;
  display: flex;
  align-items: center;
  gap: 10px;
  box-sizing: border-box;
  height: 29px;
  padding: 0 4px 0 8px;
  background: linear-gradient(#fbfaf9, #ebe7e1);
  border-top: 1px solid #ccc;
  border-bottom: 1px solid #c4bca8;
}
.badge {
  width: 16px;
  height: 16px;
  border-radius: 8px;
  background: #fff;
  color: #123c8c;
  font: bold 15px/16px 'DejaVu Sans', sans-serif;
  text-align: center;
  box-shadow: 1px 1px 1px #999;
}
</style>
